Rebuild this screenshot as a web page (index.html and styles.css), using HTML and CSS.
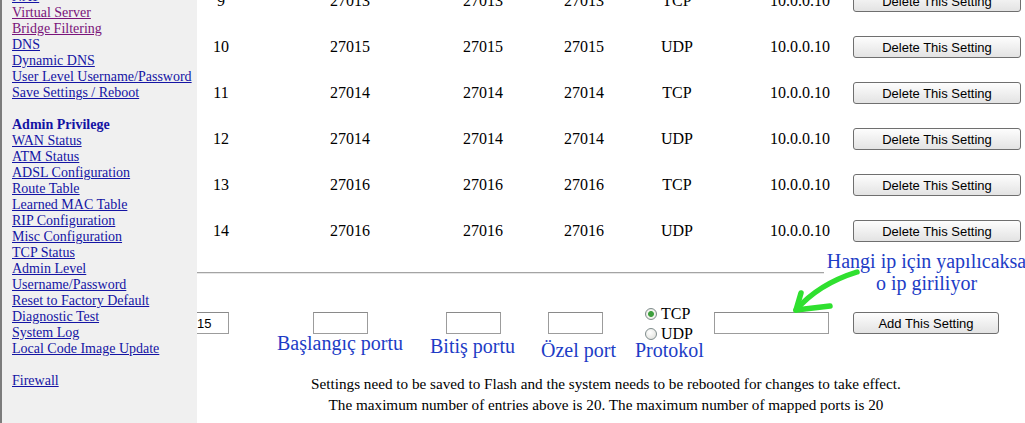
FILE: index.html
```html
<!DOCTYPE html>
<html lang="en">
<head>
<meta charset="utf-8">
<title>Virtual Server</title>
<link rel="stylesheet" href="styles.css">
</head>
<body>
<div class="page">
  <nav class="sidebar">
    <div class="menu-group first">
      <a href="#">NAT</a>
      <a href="#" class="visited">Virtual Server</a>
      <a href="#" class="visited">Bridge Filtering</a>
      <a href="#">DNS</a>
      <a href="#">Dynamic DNS</a>
      <a href="#">User Level Username/Password</a>
      <a href="#">Save Settings / Reboot</a>
    </div>
    <div class="menu-group">
      <span class="menu-title">Admin Privilege</span>
      <a href="#">WAN Status</a>
      <a href="#">ATM Status</a>
      <a href="#">ADSL Configuration</a>
      <a href="#">Route Table</a>
      <a href="#">Learned MAC Table</a>
      <a href="#">RIP Configuration</a>
      <a href="#">Misc Configuration</a>
      <a href="#">TCP Status</a>
      <a href="#">Admin Level</a>
      <a href="#">Username/Password</a>
      <a href="#">Reset to Factory Default</a>
      <a href="#">Diagnostic Test</a>
      <a href="#">System Log</a>
      <a href="#">Local Code Image Update</a>
    </div>
    <div class="menu-group">
      <a href="#">Firewall</a>
    </div>
  </nav>
  <main class="main">
    <div class="content">
      <table class="rules">
        <colgroup>
          <col class="c-idx"><col class="c-start"><col class="c-end"><col class="c-priv"><col class="c-proto"><col class="c-ip"><col class="c-act">
        </colgroup>
        <tbody>
          <tr><td>9</td><td>27013</td><td>27013</td><td>27013</td><td>TCP</td><td>10.0.0.10</td><td class="action"><button class="btn btn-del">Delete This Setting</button></td></tr>
          <tr><td>10</td><td>27015</td><td>27015</td><td>27015</td><td>UDP</td><td>10.0.0.10</td><td class="action"><button class="btn btn-del">Delete This Setting</button></td></tr>
          <tr><td>11</td><td>27014</td><td>27014</td><td>27014</td><td>TCP</td><td>10.0.0.10</td><td class="action"><button class="btn btn-del">Delete This Setting</button></td></tr>
          <tr><td>12</td><td>27014</td><td>27014</td><td>27014</td><td>UDP</td><td>10.0.0.10</td><td class="action"><button class="btn btn-del">Delete This Setting</button></td></tr>
          <tr><td>13</td><td>27016</td><td>27016</td><td>27016</td><td>TCP</td><td>10.0.0.10</td><td class="action"><button class="btn btn-del">Delete This Setting</button></td></tr>
          <tr><td>14</td><td>27016</td><td>27016</td><td>27016</td><td>UDP</td><td>10.0.0.10</td><td class="action"><button class="btn btn-del">Delete This Setting</button></td></tr>
        </tbody>
      </table>

      <section class="add-section">
        <hr class="sep">
        <div class="annotation">Hangi ip için yapılıcaksa<br>o ip giriliyor</div>
        <svg class="arrow" width="80" height="56" viewBox="0 0 80 56" aria-hidden="true">
          <path d="M72 10 C 56 15, 30 26, 11 48" fill="none" stroke="#2fe02f" stroke-width="5.5" stroke-linecap="round"/>
          <path d="M16 31 L 11 48 L 45 44" fill="none" stroke="#2fe02f" stroke-width="5.5" stroke-linecap="round" stroke-linejoin="round"/>
        </svg>
        <div class="add-row">
          <input class="field f-idx" type="text" value="15">
          <input class="field f-start" type="text">
          <input class="field f-end" type="text">
          <input class="field f-priv" type="text">
          <div class="proto">
            <label class="radio-line"><input type="radio" name="proto" checked><span>TCP</span></label>
            <label class="radio-line"><input type="radio" name="proto"><span>UDP</span></label>
          </div>
          <input class="field f-ip" type="text">
          <button class="btn btn-add">Add This Setting</button>
        </div>
        <div class="labels">
          <span class="lbl l1">Başlangıç portu</span>
          <span class="lbl l2">Bitiş portu</span>
          <span class="lbl l3">Özel port</span>
          <span class="lbl l4">Protokol</span>
        </div>
      </section>

      <p class="note">Settings need to be saved to Flash and the system needs to be rebooted for changes to take effect.<br>The maximum number of entries above is 20. The maximum number of mapped ports is 20</p>
    </div>
  </main>
</div>
</body>
</html>
```
FILE: styles.css
```css
html, body {
  margin: 0;
  padding: 0;
  background: #ffffff;
  font-family: "Liberation Serif", "Times New Roman", serif;
  color: #000;
}

.page {
  display: flex;
  height: 423px;
  overflow: hidden;
}

/* ---------- sidebar ---------- */
.sidebar {
  width: 197px;
  flex: none;
  box-sizing: border-box;
  background: #f0f0f0;
  border-left: 2px solid #7c7c7c;
  padding-left: 10px;
}

.menu-group {
  display: flex;
  flex-direction: column;
  align-items: flex-start;
  margin-bottom: 16px;
}

.menu-group.first {
  margin-top: -11px;
}

.menu-group a,
.menu-title {
  font-size: 14px;
  line-height: 16px;
  white-space: nowrap;
  color: #1414a4;
}

.menu-group a {
  text-decoration: underline;
}

.menu-group a.visited {
  color: #7a137a;
}

.menu-title {
  font-weight: bold;
}

/* ---------- main ---------- */
.main {
  flex: 1;
  min-width: 0;
  overflow: hidden;
}

.content {
  width: 918px;
  margin-left: -50px;
  margin-top: -22px;
}

.rules {
  width: 918px;
  table-layout: fixed;
  border-collapse: collapse;
  font-size: 16px;
}

.c-idx { width: 148px; }
.c-start { width: 110px; }
.c-end { width: 156px; }
.c-priv { width: 46px; }
.c-proto { width: 140px; }
.c-ip { width: 106px; }
.c-act { width: 212px; }

.rules td {
  height: 46px;
  padding: 0;
  text-align: center;
  vertical-align: middle;
  white-space: nowrap;
}

.rules td.action {
  text-align: left;
}

.btn {
  font-family: "Liberation Sans", Arial, sans-serif;
  font-size: 13px;
  height: 22px;
  padding: 0;
  color: #000;
  border: 1px solid #6f6f6f;
  border-radius: 3px;
  background: linear-gradient(#fdfdfd, #f0f0f0 50%, #e3e3e3);
  display: block;
}

.btn-del {
  width: 168px;
}

/* ---------- add section ---------- */
.add-section {
  position: relative;
  display: flow-root;
}

.sep {
  margin: 18px 0 0;
  height: 0;
  border: 0;
  border-top: 1px solid #a4a4a4;
  border-bottom: 1px solid #e6e6e6;
}

.annotation {
  position: absolute;
  left: 677px;
  top: -4px;
  width: 205px;
  background: #fff;
  text-align: center;
  white-space: nowrap;
  font-size: 20px;
  line-height: 22px;
  color: #1d3cc6;
}

.arrow {
  position: absolute;
  left: 638px;
  top: 8px;
}

.add-row {
  display: flex;
  align-items: flex-start;
  margin-top: 30px;
  height: 40px;
}

.field {
  box-sizing: border-box;
  height: 22px;
  margin-top: 8px;
  padding: 0 2px;
  border: 1px solid #9c9c9c;
  border-top-color: #8a8a8a;
  background: #fff;
  font-family: "Liberation Sans", Arial, sans-serif;
  font-size: 13px;
  color: #000;
}

.f-idx { width: 35px; margin-left: 47px; }
.f-start { width: 55px; margin-left: 84px; }
.f-end { width: 55px; margin-left: 78px; }
.f-priv { width: 55px; margin-left: 47px; }
.f-ip { width: 115px; margin-left: 19px; }

.proto {
  width: 50px;
  margin-left: 42px;
  display: flex;
  flex-direction: column;
  font-size: 16px;
  line-height: 20px;
}

.radio-line {
  display: flex;
  align-items: center;
  white-space: nowrap;
}

.radio-line input {
  appearance: none;
  -webkit-appearance: none;
  box-sizing: border-box;
  width: 12px;
  height: 12px;
  margin: 0 4px 0 0;
  border: 1px solid #7f8c8c;
  border-radius: 50%;
  background: radial-gradient(circle at 40% 35%, #ffffff, #dcdcd6);
}

.radio-line input:checked {
  background: radial-gradient(circle, #3e9e3e 0 2.5px, #9fd59f 3px, #f4f4f0 3.5px, #dcdcd6);
}

.btn-add {
  width: 146px;
  margin-left: 24px;
  margin-top: 8px;
}

.labels {
  display: grid;
  grid-template-columns: 153px 111px 94px auto;
  align-items: start;
  padding-left: 130px;
  margin-top: -11px;
}

.lbl {
  font-size: 20px;
  line-height: 20px;
  color: #1d3cc6;
  white-space: nowrap;
}

.l2 { margin-top: 3px; }
.l3 { margin-top: 7px; }
.l4 { margin-top: 7px; }

.note {
  margin: 13px 0 0;
  text-align: center;
  font-size: 15.2px;
  line-height: 21px;
}
```
